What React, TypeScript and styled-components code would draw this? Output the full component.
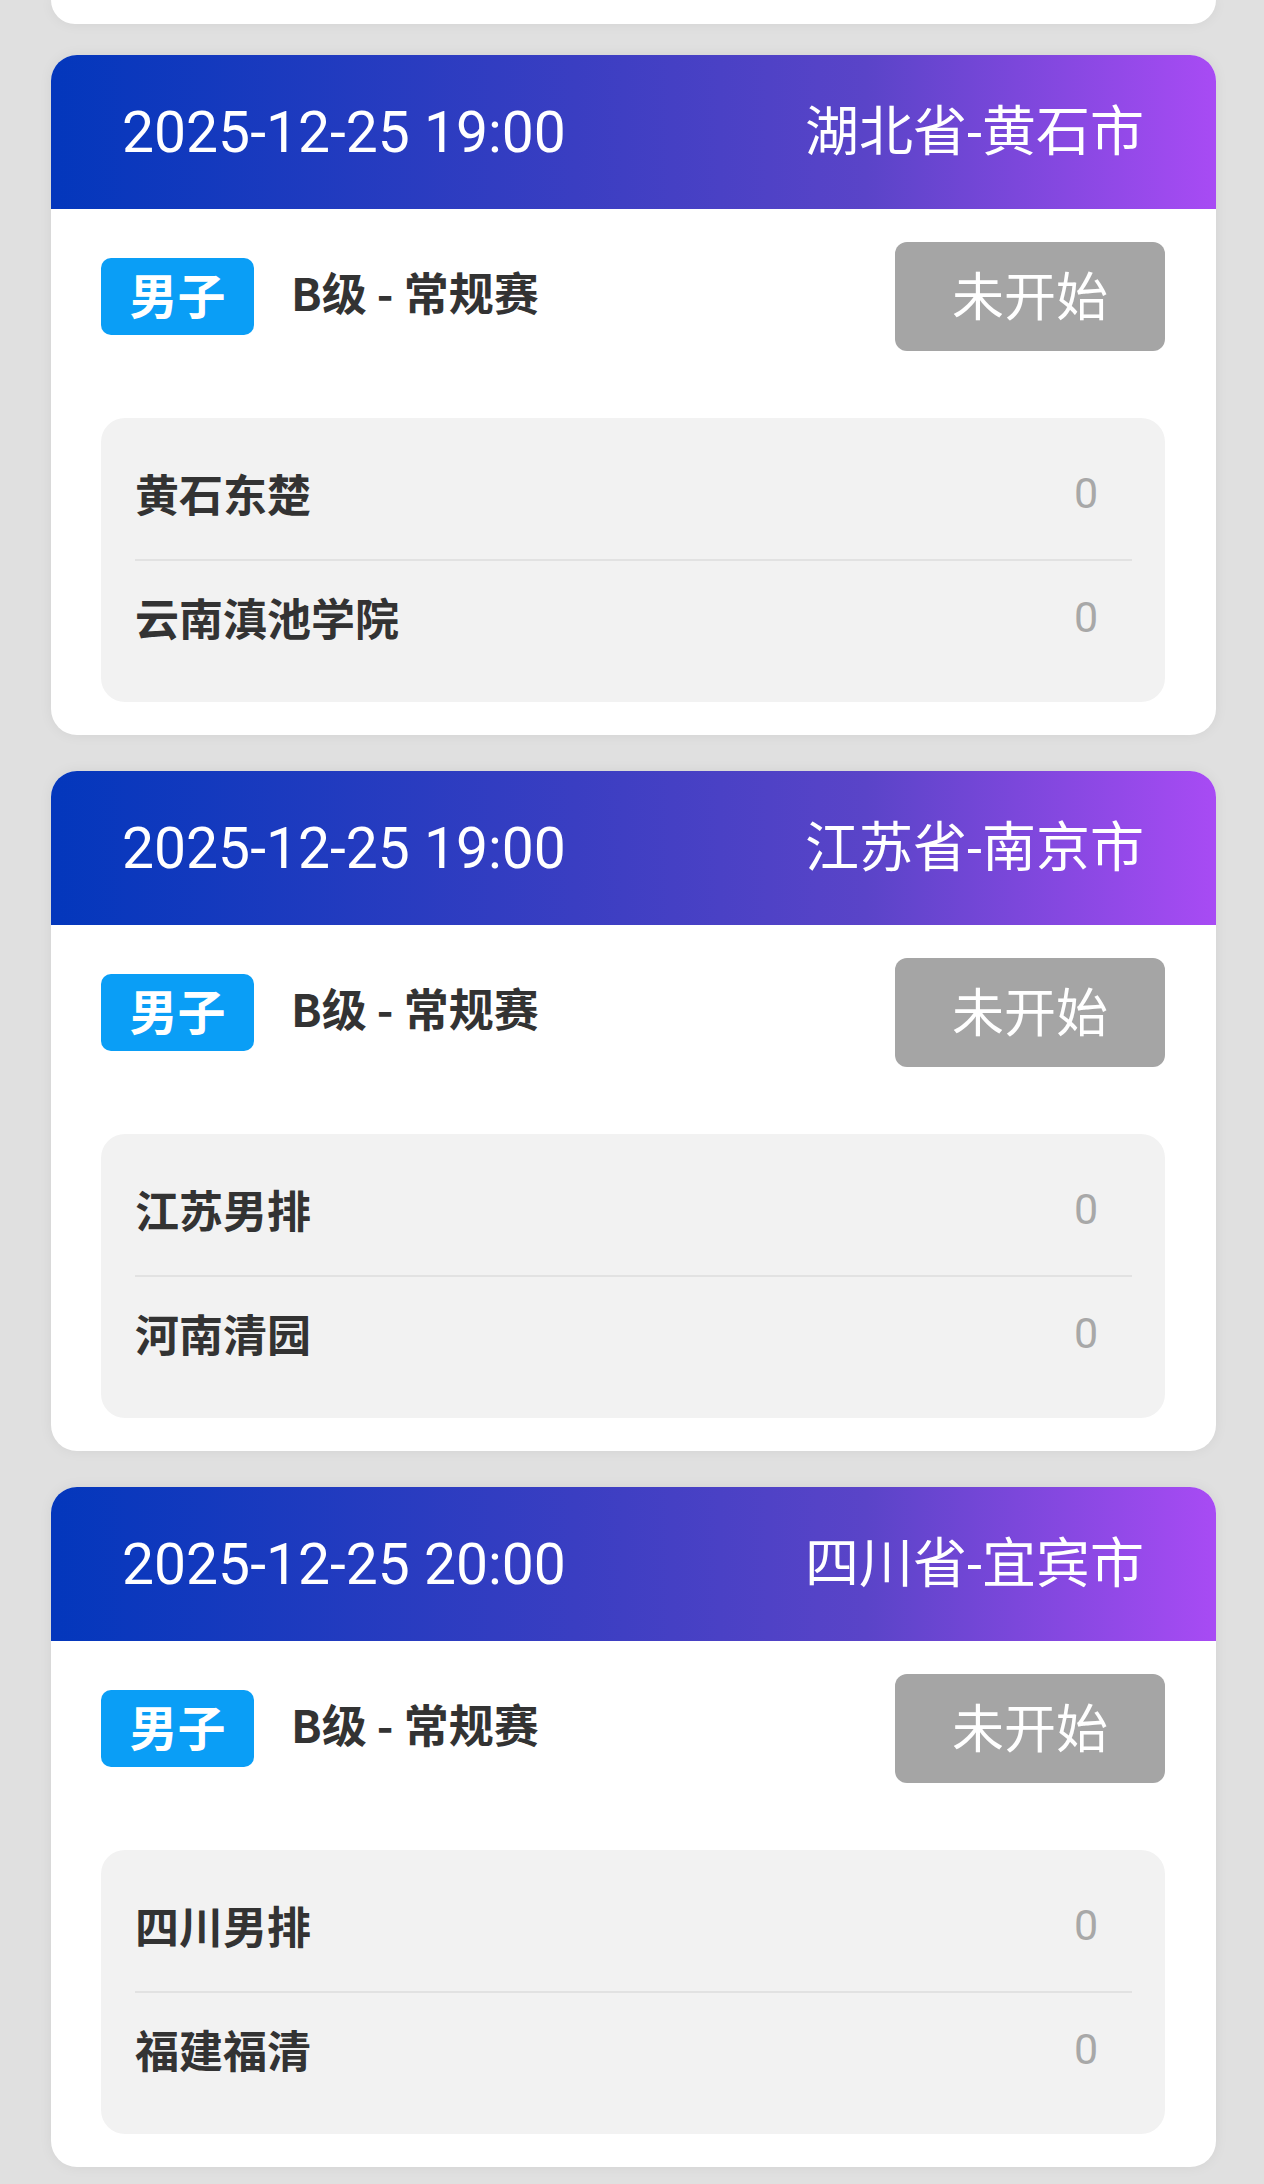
import React from "react";
import styled, { createGlobalStyle } from "styled-components";

const Global = createGlobalStyle`
  html, body { margin: 0; padding: 0; background: #e0e0e0; }
  body { font-family: Roboto, "Noto Sans CJK SC", sans-serif; }
  * { box-sizing: border-box; }
`;

const Page = styled.div`
  width: 1264px;
  min-height: 2184px;
  background: #e0e0e0;
  display: flex;
  flex-direction: column;
  gap: 36px;
  padding: 0 48px 0 51px;
`;

const CardTail = styled.div`
  height: 24px;
  background: #ffffff;
  border-radius: 0 0 26px 26px;
  box-shadow: 0 0 14px rgba(0, 0, 0, 0.06);
  flex-shrink: 0;
  margin-bottom: -5px;
`;

const Card = styled.div`
  background: #ffffff;
  border-radius: 26px;
  overflow: hidden;
  box-shadow: 0 0 14px rgba(0, 0, 0, 0.06);
  flex-shrink: 0;
`;

const Header = styled.div`
  height: 154px;
  display: flex;
  align-items: center;
  justify-content: space-between;
  padding: 0 72px 0 71px;
  background: linear-gradient(90deg, #0337bc 0%, #3a3ec2 45%, #5a44c8 70%, #a84bf4 100%);
  color: #ffffff;
  font-family: Roboto, "Noto Sans CJK SC", sans-serif;
  font-weight: 400;
`;

const DateText = styled.span`
  font-size: 57px;
`;

const PlaceText = styled.span`
  font-size: 54px;
  padding-bottom: 10px;
`;

const Body = styled.div`
  padding: 33px 51px 33px 50px;
  display: flex;
  flex-direction: column;
  gap: 67px;
`;

const InfoRow = styled.div`
  display: flex;
  align-items: center;
  height: 109px;
`;

const Tag = styled.span`
  width: 153px;
  height: 77px;
  border-radius: 10px;
  background: #0a9ef6;
  color: #ffffff;
  font-family: "Noto Sans CJK SC", sans-serif;
  font-size: 48px;
  font-weight: 700;
  display: flex;
  align-items: center;
  justify-content: center;
  padding-bottom: 7px;
`;

const Level = styled.span`
  margin-left: 37px;
  color: #333333;
  font-family: "Noto Sans CJK SC", sans-serif;
  font-size: 45px;
  font-weight: 700;
  flex: 1;
  padding-bottom: 10px;
`;

const Status = styled.span`
  width: 270px;
  height: 109px;
  border-radius: 12px;
  background: #a5a5a5;
  color: #ffffff;
  font-family: "Noto Sans CJK SC", sans-serif;
  font-size: 52px;
  font-weight: 400;
  display: flex;
  align-items: center;
  justify-content: center;
  padding-bottom: 7px;
`;

const Teams = styled.div`
  background: #f2f2f2;
  border-radius: 24px;
  padding: 9px 33px 29px 34px;
  display: flex;
  flex-direction: column;
`;

const TeamRow = styled.div<{ $divider?: boolean }>`
  height: ${(p) => (p.$divider ? 134 : 112)}px;
  display: flex;
  align-items: center;
  justify-content: space-between;
  border-bottom: ${(p) => (p.$divider ? "2px solid #e2e2e2" : "none")};
`;

const TeamName = styled.span`
  color: #333333;
  font-family: "Noto Sans CJK SC", sans-serif;
  font-size: 44px;
  font-weight: 700;
`;

const Score = styled.span`
  color: #a8a8a8;
  font-family: Roboto, sans-serif;
  font-size: 43px;
  width: 92px;
  text-align: center;
`;

type Match = { time: string; place: string; home: string; away: string };

const matches: Match[] = [
  { time: "2025-12-25 19:00", place: "湖北省-黄石市", home: "黄石东楚", away: "云南滇池学院" },
  { time: "2025-12-25 19:00", place: "江苏省-南京市", home: "江苏男排", away: "河南清园" },
  { time: "2025-12-25 20:00", place: "四川省-宜宾市", home: "四川男排", away: "福建福清" },
];

const MatchCard = ({ m }: { m: Match }) => (
  <Card>
    <Header>
      <DateText>{m.time}</DateText>
      <PlaceText>{m.place}</PlaceText>
    </Header>
    <Body>
      <InfoRow>
        <Tag>男子</Tag>
        <Level>B级 - 常规赛</Level>
        <Status>未开始</Status>
      </InfoRow>
      <Teams>
        <TeamRow $divider>
          <TeamName>{m.home}</TeamName>
          <Score>0</Score>
        </TeamRow>
        <TeamRow>
          <TeamName>{m.away}</TeamName>
          <Score>0</Score>
        </TeamRow>
      </Teams>
    </Body>
  </Card>
);

export default function App() {
  return (
    <>
      <Global />
      <Page>
        <CardTail />
        {matches.map((m, i) => (
          <MatchCard key={i} m={m} />
        ))}
      </Page>
    </>
  );
}
